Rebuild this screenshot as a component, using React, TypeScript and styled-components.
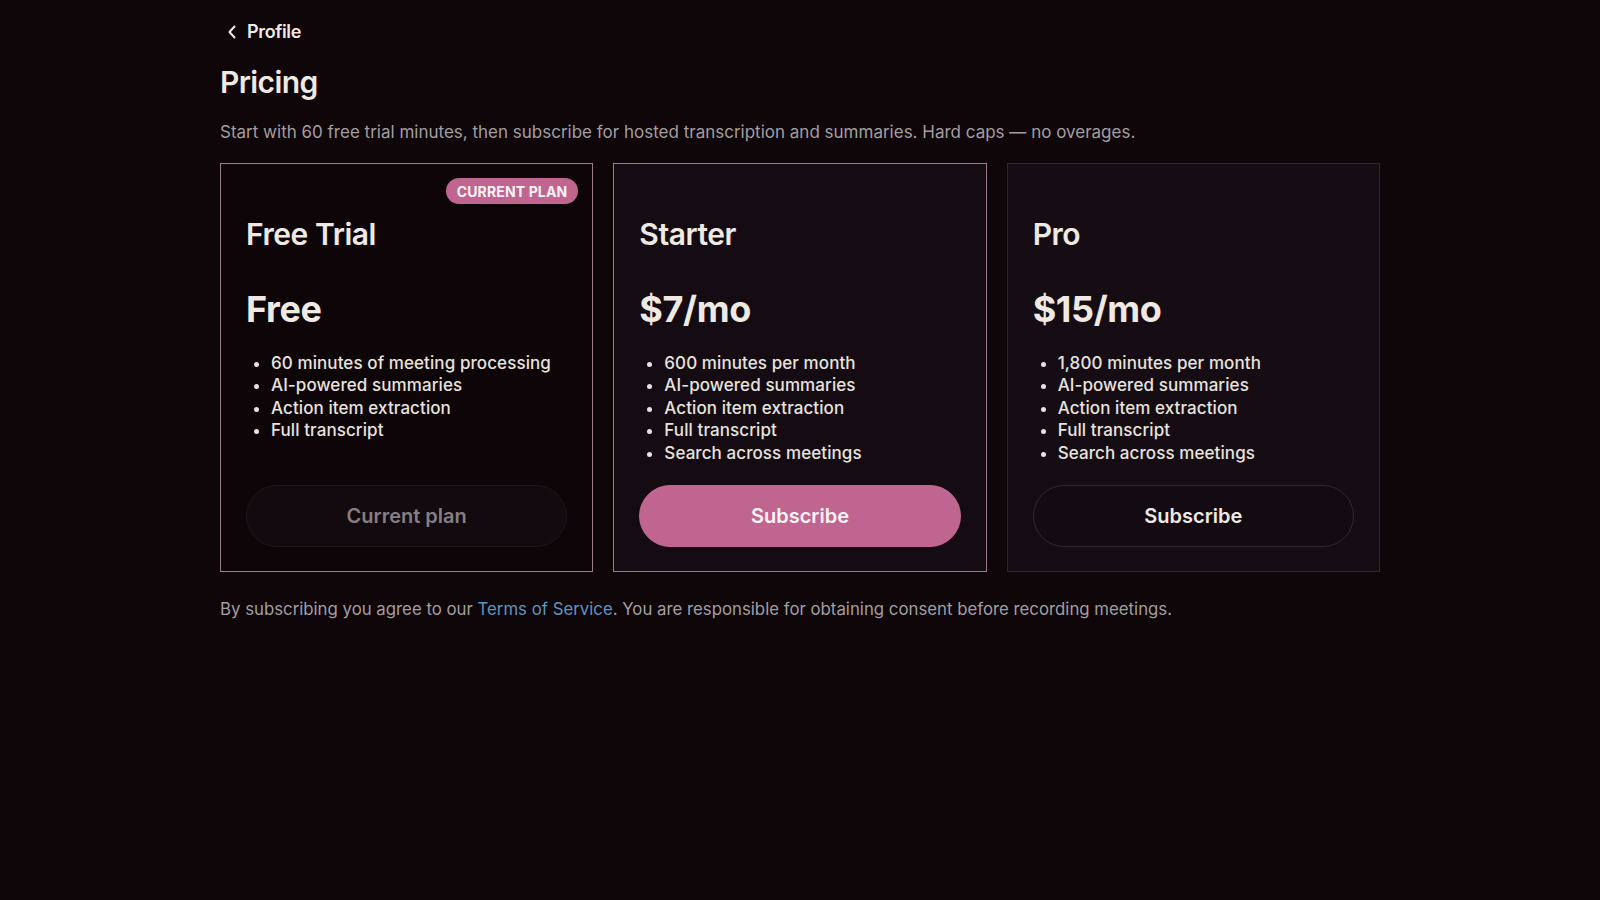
import styled, { createGlobalStyle, css } from "styled-components";

const GlobalStyle = createGlobalStyle`
  html, body {
    margin: 0;
    padding: 0;
    background: #0e0609;
    color: #efe9e3;
    font-family: Inter, "Noto Sans", "Liberation Sans", sans-serif;
  }
`;

const Page = styled.main`
  max-width: 1160px;
  margin: 0 auto;
  padding-top: 20px;
  min-height: 100vh;
  box-sizing: border-box;
`;

const BackLink = styled.a`
  display: inline-flex;
  align-items: center;
  gap: 10px;
  padding-left: 7px;
  font-size: 18px;
  line-height: 24px;
  font-weight: 600;
  letter-spacing: -0.02em;
  color: #efe9e3;
  text-decoration: none;
  cursor: pointer;
`;

const Title = styled.h1`
  margin: 20px 0 0;
  font-size: 30px;
  line-height: 36px;
  font-weight: 600;
  letter-spacing: -0.02em;
  color: #efe9e3;
`;

const Lead = styled.p`
  margin: 20px 0 0;
  font-size: 17px;
  line-height: 24px;
  letter-spacing: 0;
  color: #a39ea1;
`;

const Grid = styled.div`
  display: grid;
  grid-template-columns: repeat(3, 1fr);
  gap: 20px;
  margin-top: 19px;
`;

type Variant = "current" | "featured" | "plain";

const Card = styled.section<{ $variant: Variant }>`
  position: relative;
  display: flex;
  flex-direction: column;
  padding: 52px 25px 24px;
  border: 1px solid;
  ${({ $variant }) =>
    $variant === "current"
      ? css`
          background: #0d0508;
          border-color: #9b7b8c;
        `
      : $variant === "featured"
      ? css`
          background: #140c12;
          border-color: #9b7b8c;
        `
      : css`
          background: #150d13;
          border-color: #2f262d;
        `}
`;

const Badge = styled.span`
  position: absolute;
  top: 14px;
  right: 14px;
  height: 26px;
  padding: 0 11px;
  display: flex;
  align-items: center;
  border-radius: 999px;
  background: #c0658f;
  color: #fbf3f6;
  font-size: 14px;
  font-weight: 700;
  letter-spacing: 0.01em;
`;

const PlanName = styled.h2`
  margin: 0;
  font-size: 30px;
  line-height: 36px;
  font-weight: 600;
  letter-spacing: -0.015em;
  color: #efe9e3;
`;

const Price = styled.div`
  margin-top: 36px;
  font-size: 36px;
  line-height: 43px;
  font-weight: 700;
  letter-spacing: -0.01em;
  color: #efe9e3;
`;

const Features = styled.ul`
  margin: 21px 0 0;
  padding-left: 25px;
  list-style: disc;
`;

const Feature = styled.li`
  font-size: 17px;
  line-height: 22.4px;
  font-weight: 500;
  letter-spacing: 0.005em;
  color: #e8e3de;
`;

const ButtonSlot = styled.div`
  margin-top: auto;
  padding-top: 21px;
  display: flex;
`;

const PlanButton = styled.button<{ $variant: Variant }>`
  height: 62px;
  width: 100%;
  border-radius: 999px;
  font-family: inherit;
  font-size: 20px;
  font-weight: 600;
  letter-spacing: 0;
  cursor: pointer;
  ${({ $variant }) =>
    $variant === "current"
      ? css`
          background: #120a0f;
          border: 1px solid #1e161c;
          color: #857f83;
          cursor: default;
        `
      : $variant === "featured"
      ? css`
          background: #c0658f;
          border: 1px solid #c0658f;
          color: #fbf3f6;
        `
      : css`
          background: #130b11;
          border: 1px solid #30272e;
          color: #efe9e3;
        `}
`;

const Footnote = styled.p`
  margin: 25px 0 0;
  font-size: 16.8px;
  line-height: 24px;
  letter-spacing: 0;
  color: #a39ea1;
`;

const TermsLink = styled.a`
  color: #5f95c0;
  text-decoration: none;
`;

interface Plan {
  name: string;
  price: string;
  features: string[];
  variant: Variant;
  action: string;
}

const common = ["AI-powered summaries", "Action item extraction", "Full transcript"];

const plans: Plan[] = [
  {
    name: "Free Trial",
    price: "Free",
    features: ["60 minutes of meeting processing", ...common],
    variant: "current",
    action: "Current plan",
  },
  {
    name: "Starter",
    price: "$7/mo",
    features: ["600 minutes per month", ...common, "Search across meetings"],
    variant: "featured",
    action: "Subscribe",
  },
  {
    name: "Pro",
    price: "$15/mo",
    features: ["1,800 minutes per month", ...common, "Search across meetings"],
    variant: "plain",
    action: "Subscribe",
  },
];

function ChevronLeft() {
  return (
    <svg width="10" height="14" viewBox="0 0 10 14" fill="none">
      <path
        d="M7.5 1.5 L2.5 7 L7.5 12.5"
        stroke="currentColor"
        strokeWidth="2"
        strokeLinecap="round"
        strokeLinejoin="round"
      />
    </svg>
  );
}

export default function App() {
  return (
    <>
      <GlobalStyle />
      <Page>
        <BackLink href="#">
          <ChevronLeft />
          Profile
        </BackLink>
        <Title>Pricing</Title>
        <Lead>
          Start with 60 free trial minutes, then subscribe for hosted transcription and
          summaries. Hard caps — no overages.
        </Lead>
        <Grid>
          {plans.map((plan) => (
            <Card key={plan.name} $variant={plan.variant}>
              {plan.variant === "current" && <Badge>CURRENT PLAN</Badge>}
              <PlanName>{plan.name}</PlanName>
              <Price>{plan.price}</Price>
              <Features>
                {plan.features.map((f) => (
                  <Feature key={f}>{f}</Feature>
                ))}
              </Features>
              <ButtonSlot>
                <PlanButton $variant={plan.variant} disabled={plan.variant === "current"}>
                  {plan.action}
                </PlanButton>
              </ButtonSlot>
            </Card>
          ))}
        </Grid>
        <Footnote>
          By subscribing you agree to our <TermsLink href="#">Terms of Service</TermsLink>.
          You are responsible for obtaining consent before recording meetings.
        </Footnote>
      </Page>
    </>
  );
}
